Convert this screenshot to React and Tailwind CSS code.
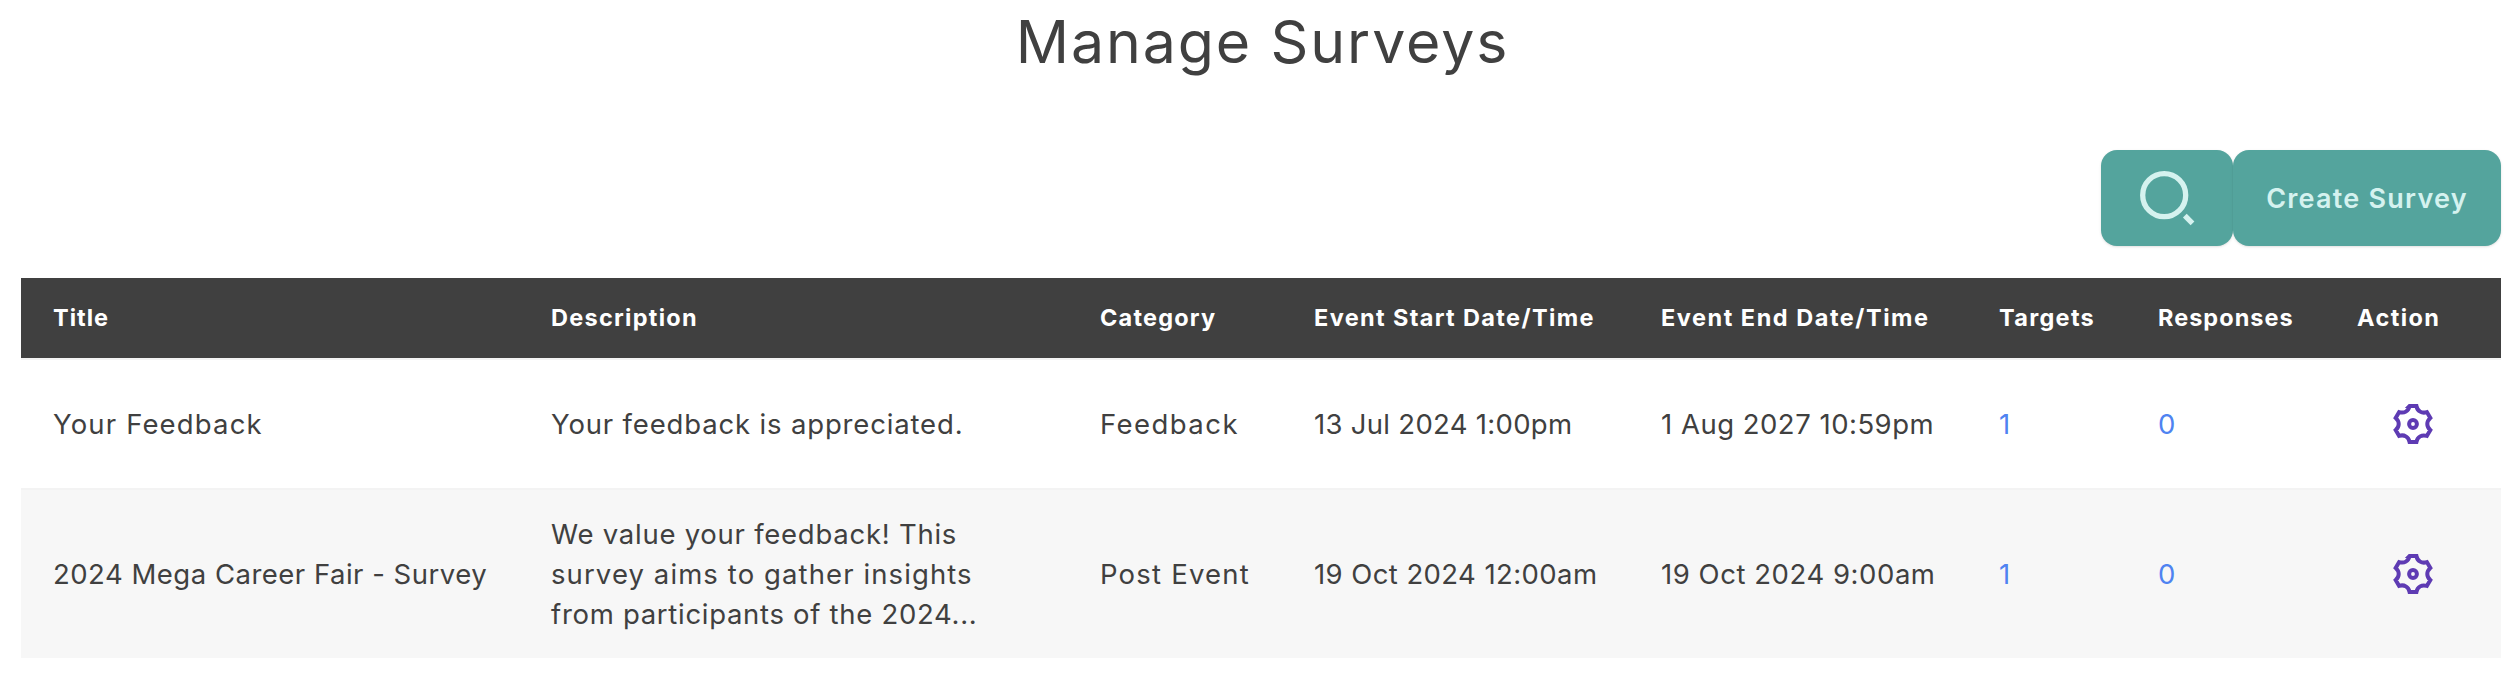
import React from "react";

const surveys = [
  {
    title: "Your Feedback",
    titleClass: "tracking-[1.15px]",
    description: [
      { text: "Your feedback is appreciated.", className: "tracking-[0.84px]" },
    ],
    category: "Feedback",
    categoryClass: "tracking-[1.44px]",
    start: "13 Jul 2024 1:00pm",
    startClass: "tracking-[0.3px]",
    end: "1 Aug 2027 10:59pm",
    endClass: "tracking-[0.5px]",
    targets: 1,
    responses: 0,
  },
  {
    title: "2024 Mega Career Fair - Survey",
    titleClass: "tracking-[0.5px]",
    description: [
      { text: "We value your feedback! This", className: "tracking-[0.75px]" },
      { text: "survey aims to gather insights", className: "tracking-[1.1px]" },
      { text: "from participants of the 2024...", className: "tracking-[0.7px]" },
    ],
    category: "Post Event",
    categoryClass: "tracking-[1.2px]",
    start: "19 Oct 2024 12:00am",
    startClass: "tracking-[0.42px]",
    end: "19 Oct 2024 9:00am",
    endClass: "tracking-[0.55px]",
    targets: 1,
    responses: 0,
  },
];

const columns = [
  { label: "Title", width: "w-[498px]", className: "tracking-[0.98px]" },
  { label: "Description", width: "w-[549px]", className: "tracking-[1.27px]" },
  { label: "Category", width: "w-[214px]", className: "tracking-[1.2px]" },
  { label: "Event Start Date/Time", width: "w-[347px]", className: "tracking-[1.36px]" },
  { label: "Event End Date/Time", width: "w-[338px]", className: "tracking-[1.52px]" },
  { label: "Targets", width: "w-[159px]", className: "tracking-[1.29px]" },
  { label: "Responses", width: "w-[199px]", className: "tracking-[1.02px]" },
  { label: "Action", width: "w-[176px]", className: "tracking-[1.4px]" },
];

// One tooth and the scallop after it, repeated every 60 degrees
const tooth = [
  [-3.4, -18],
  [3.4, -18],
  [4.4, -12.8],
  [8.9, -10.2],
  [13.9, -11.94],
];

const gearPath =
  [0, 60, 120, 180, 240, 300]
    .map((deg, i) => {
      const a = (deg * Math.PI) / 180;
      const [p0, p1, c1, c2, p2] = tooth.map(
        ([x, y]) =>
          `${(x * Math.cos(a) - y * Math.sin(a)).toFixed(2)} ${(x * Math.sin(a) + y * Math.cos(a)).toFixed(2)}`
      );
      return `${i === 0 ? `M${p0}` : ""}L${p1}C${c1} ${c2} ${p2}`;
    })
    .join("") + "Z";

const GearIcon = () => (
  <svg
    className="h-10 w-10"
    viewBox="-20 -20 40 40"
    fill="none"
    stroke="currentColor"
    strokeWidth="4">
    <path d={gearPath} />
    <circle r="3.9" />
  </svg>
);

const SearchIcon = () => (
  <svg
    className="h-16 w-16"
    viewBox="0 0 64 64"
    fill="none"
    stroke="currentColor"
    strokeWidth="5.3">
    <circle cx="29.2" cy="29.2" r="21.5" />
    <path d="M49.8 49.6L57.5 57.4" />
  </svg>
);

const App = () => {
  return (
    <div className="min-h-[682px] bg-white font-['Inter',sans-serif] text-[27.5px] leading-10 text-[#404040]">
      <h1 className="h-[150px] pt-[6px] pl-[5px] text-center text-[59px] leading-[72px] tracking-[1.9px]">
        Manage Surveys
      </h1>

      {/* Toolbar */}
      <div className="flex justify-end pr-[19px] text-[#d5f2ef]">
        <button className="flex h-24 w-[132px] items-center justify-center rounded-2xl bg-[#54a49d] shadow-sm">
          <SearchIcon />
        </button>
        <button className="h-24 w-[268px] rounded-2xl bg-[#54a49d] pt-px text-[27px] font-semibold tracking-[1.23px] shadow-sm">
          Create Survey
        </button>
      </div>

      <table className="mt-8 ml-[21px] w-[2480px] table-fixed border-separate border-spacing-0 text-left">
        <thead>
          <tr className="h-20 bg-[#404040] text-[23.5px] text-white">
            {columns.map((col) => (
              <th key={col.label} className={`${col.width} ${col.className} p-0 pl-8 font-bold whitespace-nowrap`}>
                {col.label}
              </th>
            ))}
          </tr>
        </thead>
        <tbody>
          {surveys.map((item, index) => (
            <tr
              key={index}
              className="h-[130px] whitespace-nowrap even:bg-[#f7f7f7] *:border-t-2 *:border-[#f3f3f3]">
              <td className={`pl-8 ${item.titleClass}`}>{item.title}</td>
              <td className="py-6 pl-8">
                {item.description.map((line) => (
                  <p key={line.text} className={line.className}>
                    {line.text}
                  </p>
                ))}
              </td>
              <td className={`pl-8 ${item.categoryClass}`}>{item.category}</td>
              <td className={`pl-8 ${item.startClass}`}>{item.start}</td>
              <td className={`pl-8 ${item.endClass}`}>{item.end}</td>
              <td className="pl-8 text-[#4f83f1]">{item.targets}</td>
              <td className="pl-8 text-[#4f83f1]">{item.responses}</td>
              <td className="text-[#5e3bb3]">
                <div className="flex justify-center">
                  <GearIcon />
                </div>
              </td>
            </tr>
          ))}
        </tbody>
      </table>
    </div>
  );
};

export default App;
